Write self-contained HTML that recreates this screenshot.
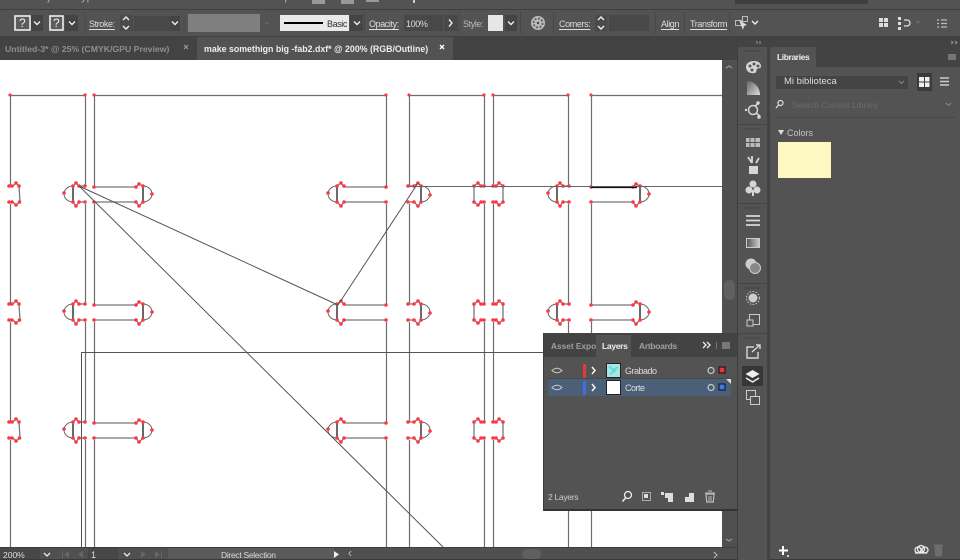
<!DOCTYPE html>
<html><head><meta charset="utf-8"><style>
html,body{margin:0;padding:0;width:960px;height:560px;overflow:hidden;background:#535353}
body{position:relative;font-family:"Liberation Sans",sans-serif;font-size:9px;color:#ddd}
.t{position:absolute;white-space:nowrap;line-height:12px}
.c{letter-spacing:-.4px}
.u{text-decoration:underline;text-underline-offset:2px}
svg{position:absolute;left:0;top:0}
</style></head><body>
<svg width="960" height="560" viewBox="0 0 960 560" fill="none">
<defs>
<linearGradient id="g" x1="0" x2="1"><stop offset="0" stop-color="#555"/><stop offset="1" stop-color="#ccc"/></linearGradient>
<linearGradient id="g2" x1="1" y1="1" x2="0" y2="0"><stop offset="0" stop-color="#ddd"/><stop offset="1" stop-color="#666"/></linearGradient>
<g id="B">
<path d="M85 186H79L76 183L73 186M85 202H79L76 206L73 202" stroke="#777" stroke-width="1.200"/>
<path d="M73 186V202" stroke="#444" stroke-width="1.600"/>
<path d="M73 186A9 8 0 0 0 73 202" stroke="#666"/>
<g fill="#f93a44"><circle cx="85" cy="186" r="1.800"/><circle cx="79" cy="186" r="1.800"/><circle cx="76" cy="183" r="1.800"/><circle cx="73" cy="186" r="1.800"/><circle cx="64" cy="193" r="1.800"/><circle cx="73" cy="202" r="1.800"/><circle cx="76" cy="206" r="1.800"/><circle cx="79" cy="202" r="1.800"/><circle cx="85" cy="202" r="1.800"/></g>
</g>
<g id="C">
<path d="M94 187H136L139 184L143 186M94 202H136L139 206L143 202" stroke="#777" stroke-width="1.300"/>
<path d="M143 186V202" stroke="#444" stroke-width="1.600"/>
<path d="M143 186A9 8 0 0 1 143 202" stroke="#666"/>
<g fill="#f93a44"><circle cx="94" cy="187" r="1.800"/><circle cx="136" cy="187" r="1.800"/><circle cx="139" cy="184" r="1.800"/><circle cx="143" cy="186" r="1.800"/><circle cx="152" cy="194" r="1.800"/><circle cx="143" cy="202" r="1.800"/><circle cx="139" cy="206" r="1.800"/><circle cx="136" cy="202" r="1.800"/><circle cx="94" cy="202" r="1.800"/></g>
</g>
<g id="row">
<path d="M10 186H13L16 183L19 186L20 202L16 205L13 202H10" stroke="#777" stroke-width="1.300"/>
<g fill="#f93a44"><circle cx="9" cy="186" r="1.800"/><circle cx="12" cy="186" r="1.800"/><circle cx="16" cy="183" r="1.800"/><circle cx="19" cy="186" r="1.800"/><circle cx="19.500" cy="202" r="1.800"/><circle cx="16" cy="205" r="1.800"/><circle cx="12" cy="202" r="1.800"/><circle cx="9" cy="202" r="1.800"/></g>
<use href="#B"/><use href="#C"/>
<path d="M386 187H344L341 183L337 186M386 202H344L341 206L337 202" stroke="#777" stroke-width="1.300"/>
<path d="M337 186V202" stroke="#444" stroke-width="1.600"/>
<path d="M337 186A9 8 0 0 0 337 202" stroke="#666"/>
<g fill="#f93a44"><circle cx="386" cy="187" r="1.800"/><circle cx="344" cy="186" r="1.800"/><circle cx="341" cy="183" r="1.800"/><circle cx="337" cy="186" r="1.800"/><circle cx="328" cy="193" r="1.800"/><circle cx="337" cy="202" r="1.800"/><circle cx="341" cy="206" r="1.800"/><circle cx="344" cy="202" r="1.800"/><circle cx="386" cy="202" r="1.800"/></g>
<path d="M408 186H414L418 183L421 186M408 202H414L418 206L421 202" stroke="#777" stroke-width="1.300"/>
<path d="M421 186V202" stroke="#444" stroke-width="1.600"/>
<path d="M421 186A9 8 0 0 1 421 202" stroke="#666"/>
<g fill="#f93a44"><circle cx="408" cy="186" r="1.800"/><circle cx="414" cy="186" r="1.800"/><circle cx="418" cy="183" r="1.800"/><circle cx="421" cy="186" r="1.800"/><circle cx="430" cy="195" r="1.800"/><circle cx="421" cy="202" r="1.800"/><circle cx="418" cy="206" r="1.800"/><circle cx="414" cy="202" r="1.800"/><circle cx="408" cy="202" r="1.800"/></g>
<path d="M484 186H481L478 183L474 186V202L478 205L481 202H484" stroke="#777" stroke-width="1.300"/>
<path d="M493 186H496L499 183L503 186V202L499 205L496 202H493" stroke="#777" stroke-width="1.300"/>
<g fill="#f93a44"><circle cx="484" cy="186" r="1.800"/><circle cx="481" cy="186" r="1.800"/><circle cx="478" cy="183" r="1.800"/><circle cx="474" cy="186" r="1.800"/><circle cx="474" cy="202" r="1.800"/><circle cx="478" cy="205" r="1.800"/><circle cx="481" cy="202" r="1.800"/><circle cx="484" cy="202" r="1.800"/><circle cx="493" cy="186" r="1.800"/><circle cx="496" cy="186" r="1.800"/><circle cx="499" cy="183" r="1.800"/><circle cx="503" cy="186" r="1.800"/><circle cx="503" cy="202" r="1.800"/><circle cx="499" cy="205" r="1.800"/><circle cx="496" cy="202" r="1.800"/><circle cx="493" cy="202" r="1.800"/></g>
<use href="#B" transform="translate(484 0)"/><use href="#C" transform="translate(497 0)"/>
</g>
</defs>

<rect width="960" height="560" fill="#535353"/>
<rect x="0" y="9" width="960" height="1" fill="#3f3f3f"/>
<rect x="0" y="36" width="960" height="1" fill="#3f3f3f"/>
<rect x="0" y="37" width="737" height="23" fill="#434343"/>
<rect x="197" y="37" width="256" height="23" fill="#535353"/>

<rect x="0" y="60" width="722" height="487" fill="#fff"/>
<g stroke="#6e6e6e" stroke-width="1.200">
<path d="M10 95.500H85M94 95.500H386M409 95.500H484M493 95.500H568M591 95.500H722"/>
<path d="M10.500 95V186M85.500 95V186M94.500 95V187M386.500 95V187M409.500 95V186M484.500 95V186M493.500 95V186M568.500 95V186M591.500 95V187"/>
<path d="M10.500 204V304M85.500 204V304M94.500 204V304M386.500 204V304M409.500 204V304M484.500 204V304M493.500 204V304M568.500 204V304M591.500 204V304"/>
<path d="M10.500 322V422M85.500 322V422M94.500 322V422M386.500 322V422M409.500 322V422M484.500 322V422M493.500 322V422M568.500 322V422M591.500 322V422"/>
<path d="M10.500 440V547M85.500 440V547M94.500 440V547M386.500 440V547M409.500 440V547M484.500 440V547M493.500 440V547M568.500 440V547M591.500 440V547"/>
</g>
<use href="#row"/>
<use href="#row" transform="translate(0 118)"/>
<use href="#row" transform="translate(0 236)"/>
<path d="M409 186.500H722" stroke="#666"/>
<path d="M591 187.500H637" stroke="#111" stroke-width="1.200"/>
<path d="M79 186L338 305M79 186L443 547M418 183L338 305" stroke="#555"/>
<path d="M81.500 547V352.500H543" stroke="#555"/>
<g fill="#f93a44"><circle cx="10" cy="95" r="1.600"/><circle cx="85" cy="95" r="1.600"/><circle cx="94" cy="95" r="1.600"/><circle cx="386" cy="95" r="1.600"/><circle cx="409" cy="95" r="1.600"/><circle cx="484" cy="95" r="1.600"/><circle cx="493" cy="95" r="1.600"/><circle cx="568" cy="95" r="1.600"/><circle cx="591" cy="95" r="1.600"/></g>

<rect x="722" y="60" width="15" height="487" fill="#505050"/>
<rect x="724" y="280" width="11" height="20" rx="5" fill="#606060"/>
<path d="M726 68l3-2 3 2M726 539l3 2 3-2" stroke="#999" stroke-width="1.200"/>

<rect x="0" y="547" width="737" height="13" fill="#505050"/>
<rect x="0" y="547" width="737" height="1" fill="#3d3d3d"/>
<rect x="0" y="559" width="960" height="1" fill="#3a3a3a"/>
<rect x="0" y="548" width="40" height="11" fill="#474747"/>
<rect x="88" y="548" width="30" height="11" fill="#474747"/>
<rect x="168" y="548" width="166" height="11" fill="#5a5a5a"/>
<rect x="522" y="549" width="19" height="10" rx="5" fill="#5f5f5f"/>
<g stroke="#eee" stroke-width="1.300"><path d="M44 553l3 3 3-3M124 553l3 3 3-3"/></g>
<g fill="#666"><path d="M62 551v7h1v-7zM69 551l-5 3.500 5 3.500zM83 551l-5 3.500 5 3.500zM141 551l5 3.500-5 3.500zM155 551l5 3.500-5 3.500zM161 551v7h1v-7z"/></g>
<path d="M334 551l5 3.500-5 3.500z" fill="#eee"/>
<path d="M351 551l-2 2.500 2 2.500M714 552l3 3-3 3" stroke="#bbb"/>

<g>
<rect x="31" y="15" width="12" height="16" fill="#444"/>
<rect x="65" y="15" width="13" height="16" fill="#444"/>
<rect x="15" y="16" width="15" height="14" fill="#5c5c5c" stroke="#eee" stroke-width="1.600"/>
<rect x="50" y="16" width="13" height="14" fill="#5c5c5c" stroke="#eee" stroke-width="1.600"/>
<rect x="120" y="15" width="13" height="16" fill="#4a4a4a"/>
<rect x="134" y="16" width="36" height="15" fill="#484848"/>
<rect x="170" y="16" width="10" height="15" fill="#444"/>
<rect x="188" y="14" width="72" height="18" fill="#7f7f7f"/>
<rect x="280" y="15" width="69" height="16" fill="#e9e9e9"/>
<rect x="284" y="22" width="39" height="2" fill="#000"/>
<rect x="350" y="15" width="13" height="16" fill="#444"/>
<rect x="404" y="15" width="39" height="16" fill="#484848"/>
<rect x="444" y="15" width="14" height="16" fill="#484848"/>
<rect x="488" y="15" width="15" height="16" fill="#e6e6e6"/>
<rect x="505" y="15" width="12" height="16" fill="#444"/>
<rect x="595" y="15" width="12" height="16" fill="#4a4a4a"/>
<rect x="609" y="15" width="40" height="16" fill="#484848"/>
<rect x="735" y="0" width="133" height="4" fill="#3f3f3f"/>
<rect x="312" y="0" width="13" height="4" fill="#999"/>
<rect x="341" y="0" width="13" height="4" fill="#999"/>
<rect x="366" y="0" width="13" height="2" fill="#999"/>
<path d="M414 0v3" stroke="#ccc" stroke-width="2"/>
<g stroke="#eee" stroke-width="1.400">
<path d="M34 21.500l3 3 3-3M69 21.500l3 3 3-3M172 21.500l3 3 3-3M354 21.500l3 3 3-3M508 21.500l3 3 3-3M752 21l3 3 3-3"/>
<path d="M123 20l3-3 3 3M123 26l3 3 3-3M598 20l3-3 3 3M598 26l3 3 3-3"/>
<path d="M449 19.500l3 3.500-3 3.500"/>
</g>
<path d="M265 22l2 2 2-2M916 21l2 2 2-2" stroke="#6e6e6e"/>
<circle cx="538" cy="23" r="7" fill="#bbb"/>
<circle cx="538" cy="23" r="4.500" fill="none" stroke="#666" stroke-width="2" stroke-dasharray="2 1.500"/>
<circle cx="538" cy="23" r="1.200" fill="#444"/>
<g stroke="#bbb"><rect x="735.500" y="20.500" width="6" height="5" fill="none"/><rect x="742.500" y="16.500" width="5" height="5" fill="none"/></g>
<path d="M739 20l8 5-3 1-1 4z" fill="#ddd"/>
<g fill="#ddd"><rect x="879" y="18" width="4" height="4"/><rect x="884" y="18" width="4" height="4"/><rect x="879" y="23" width="4" height="4"/><rect x="884" y="23" width="4" height="4"/>
<rect x="898" y="17" width="3" height="3"/><rect x="898" y="22" width="3" height="3"/><rect x="898" y="27" width="3" height="3"/></g>
<path d="M904 20h3a3 3 0 0 1 0 6h-3" stroke="#ddd" stroke-width="1.300"/>
<path d="M937 20h2M941 20h6M937 23.500h2M941 23.500h6M937 27h2M941 27h6" stroke="#bbb" stroke-width="1.300"/>
<g stroke="#484848"><path d="M85 12v22M184 12v22M364.500 12v22M459.500 12v22M520.500 12v22M553.500 12v22M655.500 12v22M684.500 12v22M729.500 12v22"/></g>
</g>
<path d="M184 45l4 4m0-4l-4 4" stroke="#999" stroke-width="1.200"/>
<path d="M440 45l4 4m0-4l-4 4" stroke="#fff" stroke-width="1.300"/>

<rect x="737" y="37" width="223" height="10" fill="#434343"/>
<rect x="737" y="47" width="32" height="513" fill="#535353"/>
<rect x="737" y="37" width="1" height="523" fill="#3d3d3d"/>
<rect x="767" y="47" width="3" height="513" fill="#434343"/>
<path d="M757 41v3M760 41v3M951 41l2 1.500-2 1.500M955 41l2 1.500-2 1.500" stroke="#999"/>
<path d="M738 124.500h29M738 203.500h29M738 283.500h29M738 333.500h29" stroke="#454545"/>
<path d="M744 51h16M744 129h16M744 208h16M744 288h16M744 338h16" stroke="#4b4b4b" stroke-width="2"/>
<path d="M746 67c0-4 4-6 8-6s7 2 7 5-3 2-4 3 0 3-2 4c-4 1-9-1-9-6z" fill="#d6d6d6"/>
<g fill="#555"><circle cx="750" cy="66" r="1.500"/><circle cx="754" cy="64" r="1.500"/><circle cx="758" cy="66" r="1.500"/><circle cx="752" cy="70" r="1.500"/></g>
<path d="M747 81c7 0 13 6 13 14h-13z" fill="url(#g2)"/>
<g fill="none" stroke="#d6d6d6" stroke-width="1.500"><circle cx="753" cy="110" r="4.500"/><path d="M755 106l4-3M756 113l4 3"/></g>
<g fill="#d6d6d6"><circle cx="758" cy="103" r="1.800"/><circle cx="759" cy="117" r="1.800"/><circle cx="746" cy="110" r="1.200"/></g>
<rect x="746" y="138" width="14" height="9" fill="#bbb"/>
<path d="M750 138v9M755 138v9M746 142.500h14" stroke="#555"/>
<path d="M748 157l4 6M752 156v7M759 158l-3 5" stroke="#d6d6d6" stroke-width="1.800"/>
<rect x="749" y="166" width="9" height="8" fill="#d6d6d6"/>
<g fill="#d6d6d6"><circle cx="753" cy="184" r="3.500"/><circle cx="749" cy="190" r="3.500"/><circle cx="757" cy="190" r="3.500"/><rect x="752" y="190" width="2" height="6"/></g>
<path d="M746 216h14M746 220.500h14M746 225h14" stroke="#d6d6d6" stroke-width="1.800"/>
<rect x="746.500" y="238.500" width="13" height="9" fill="url(#g)" stroke="#ccc"/>
<circle cx="751" cy="264" r="5.500" fill="#ccc"/><circle cx="755" cy="268" r="5.500" fill="#888" stroke="#ccc"/>
<circle cx="753" cy="298" r="4.500" fill="#ccc"/><circle cx="753" cy="298" r="6.500" fill="none" stroke="#ccc" stroke-dasharray="1.500 1.500"/>
<rect x="749.500" y="314.500" width="10" height="10" fill="none" stroke="#ccc"/>
<rect x="747" y="320" width="6" height="6" fill="#555" stroke="#ccc"/>
<path d="M754 347h-7v11h11v-6" fill="none" stroke="#d6d6d6" stroke-width="1.400"/>
<path d="M752 352l8-7M756 345h4v4" fill="none" stroke="#d6d6d6" stroke-width="1.400"/>
<rect x="742" y="366" width="21" height="20" fill="#373737"/>
<path d="M752.500 370l7 4-7 4-7-4z" fill="#eee"/>
<path d="M746 378l6.500 4 6.500-4" fill="none" stroke="#eee" stroke-width="1.500"/>
<rect x="746.500" y="390.500" width="9" height="9" fill="none" stroke="#ccc"/>
<rect x="750.500" y="396.500" width="9" height="8" fill="#535353" stroke="#ccc"/>

<rect x="770" y="47" width="190" height="20" fill="#434343"/>
<rect x="770" y="47" width="46" height="21" fill="#535353"/>
<rect x="948" y="54" width="8" height="6" fill="#777"/>
<rect x="776" y="76" width="132" height="13" fill="#444"/>
<path d="M899 81l2.500 2.500 2.500-2.500" stroke="#888"/>
<rect x="917" y="73" width="15" height="18" fill="#3a3a3a"/>
<g fill="#eee"><rect x="919" y="77" width="5" height="4.500"/><rect x="925" y="77" width="4.500" height="4.500"/><rect x="919" y="82.500" width="5" height="4.500"/><rect x="925" y="82.500" width="4.500" height="4.500"/></g>
<path d="M940 78h9M940 81.500h9M940 85h9" stroke="#ccc" stroke-width="1.600"/>
<circle cx="780.500" cy="103" r="2.500" fill="none" stroke="#ddd" stroke-width="1.200"/><path d="M778.500 105l-2.500 3" stroke="#ddd" stroke-width="1.300"/>
<path d="M946 103l2.500 2.500 2.500-2.500" stroke="#888"/>
<path d="M776 117.500h180" stroke="#484848"/>
<path d="M778 130h6l-3 5z" fill="#ddd"/>
<rect x="778" y="142" width="53" height="36" fill="#fdf8c2"/>
<path d="M783 546v9M779 550.500h9" stroke="#fff" stroke-width="2"/>
<rect x="787" y="555" width="2" height="2" fill="#ccc"/>
<g fill="none" stroke="#eee" stroke-width="1.300"><circle cx="918" cy="550" r="3"/><circle cx="921" cy="549" r="3.500"/><circle cx="925" cy="550" r="3"/><path d="M915 553h12"/></g>
<path d="M935 546h7l-.7 10h-5.600zM934 545h9" fill="#6e6e6e" stroke="#6e6e6e"/>

<rect x="543" y="333" width="194" height="177" fill="#535353"/>
<rect x="543" y="333" width="194" height="24" fill="#434343"/>
<rect x="596" y="335" width="35" height="22" fill="#535353"/>
<rect x="543" y="509" width="194" height="2" fill="#333"/>
<rect x="543" y="333" width="1" height="177" fill="#3d3d3d"/>
<path d="M703 342l3 3-3 3M707 342l3 3-3 3" stroke="#eee" stroke-width="1.300"/>
<path d="M716.500 342v7" stroke="#777"/><rect x="722" y="342" width="8" height="7" fill="#777"/>
<rect x="548" y="379" width="183" height="17" fill="#4b6078"/>
<path d="M548 378.500h183" stroke="#484848"/>
<rect x="583" y="364" width="3" height="14" fill="#e5383f"/>
<rect x="583" y="381" width="3" height="14" fill="#3f6fe0"/>
<g fill="none" stroke="#ccc"><path d="M552 370.500q5-4.500 10 0q-5 4.500-10 0zM552 387.500q5-4.500 10 0q-5 4.500-10 0z"/></g>
<path d="M592 367l3 3.500-3 3.500M592 384l3 3.500-3 3.500" fill="none" stroke="#fff" stroke-width="1.400"/>
<rect x="606.500" y="363.500" width="14" height="14" fill="#a5e9e6" stroke="#222"/>
<path d="M609 366l4 4 5-3M610 374l6-4" stroke="#6cd6d8" stroke-width="2"/>
<rect x="606.500" y="380.500" width="14" height="14" fill="#fff" stroke="#222"/>
<circle cx="711" cy="370.500" r="3" fill="none" stroke="#ccc" stroke-width="1.200"/>
<circle cx="711" cy="387.500" r="3" fill="none" stroke="#ccc" stroke-width="1.200"/>
<rect x="719" y="367" width="6" height="6" fill="#e8343c" stroke="#111"/>
<rect x="719" y="384" width="6" height="6" fill="#3f78ea" stroke="#111"/>
<path d="M726 379h5v5z" fill="#ddd"/>
<circle cx="628" cy="495" r="3.500" fill="none" stroke="#eee" stroke-width="1.300"/><path d="M625.500 498l-3 3.500" stroke="#eee" stroke-width="1.500"/>
<rect x="642.500" y="492.500" width="8" height="8" fill="none" stroke="#aaa"/><rect x="644" y="494" width="4" height="4" fill="#ddd"/>
<path d="M665 493h8v9h-5v-4h-3z" fill="#ddd"/><rect x="661" y="492" width="3" height="3" fill="#ddd"/>
<path d="M685 493h9v9h-9z" fill="#ddd"/><path d="M684 493h5v4h-5z" fill="#535353"/>
<path d="M706 494h8l-.7 8h-6.600z" fill="none" stroke="#bbb" stroke-width="1.200"/><path d="M705 493h10M708 491h4" stroke="#bbb"/>
<path d="M709 496v5M711 496v5" stroke="#bbb"/>
</svg>

<span class="t" style="left:8px;top:-9px;color:#b0b0b0;font-size:11px">Edit</span>
<span class="t" style="left:33px;top:-9px;color:#b0b0b0;font-size:11px">Object</span>
<span class="t" style="left:75px;top:-9px;color:#b0b0b0;font-size:11px">Type</span>
<span class="t" style="left:108px;top:-9px;color:#b0b0b0;font-size:11px">Select</span>
<span class="t" style="left:148px;top:-9px;color:#b0b0b0;font-size:11px">Effect</span>
<span class="t" style="left:187px;top:-9px;color:#b0b0b0;font-size:11px">View</span>
<span class="t" style="left:221px;top:-9px;color:#b0b0b0;font-size:11px">Window</span>
<span class="t" style="left:268px;top:-9px;color:#b0b0b0;font-size:11px">Help</span>

<span class="t" style="left:19px;top:17px;font-size:12px;color:#eee">?</span>
<span class="t" style="left:53px;top:17px;font-size:12px;color:#eee">?</span>
<span class="t u c" style="left:89px;top:18px">Stroke:</span>
<span class="t c" style="left:327px;top:18px;color:#333">Basic</span>
<span class="t u c" style="left:369px;top:18px">Opacity:</span>
<span class="t c" style="left:406px;top:18px">100%</span>
<span class="t c" style="left:463px;top:18px;color:#bbb">Style:</span>
<span class="t u c" style="left:559px;top:18px">Corners:</span>
<span class="t u c" style="left:661px;top:18px">Align</span>
<span class="t u c" style="left:690px;top:18px">Transform</span>

<span class="t" style="left:5px;top:43px;color:#8f8f8f;font-weight:bold;font-size:8.700px">Untitled-3* @ 25% (CMYK/GPU Preview)</span>
<span class="t" style="left:204px;top:43px;color:#eee;font-weight:bold;font-size:8.800px">make somethign big -fab2.dxf* @ 200% (RGB/Outline)</span>

<span class="t" style="left:777px;top:51px;color:#eee;font-weight:bold;font-size:8.500px;letter-spacing:-.4px">Libraries</span>
<span class="t" style="left:784px;top:76px;color:#ddd;font-size:9.500px">Mi biblioteca</span>
<span class="t" style="left:792px;top:99px;color:#6c6c6c;font-size:8.500px">Search Current Library</span>
<span class="t" style="left:787px;top:127px;color:#c4c4c4;font-size:9px">Colors</span>

<span class="t" style="left:551px;top:340px;color:#a0a0a0;font-weight:bold;font-size:8.300px;width:45px;overflow:hidden">Asset Export</span>
<span class="t" style="left:602px;top:340px;color:#eee;font-weight:bold;font-size:8.500px;letter-spacing:-.3px">Layers</span>
<span class="t" style="left:639px;top:340px;color:#a0a0a0;font-weight:bold;font-size:8.500px;letter-spacing:-.3px">Artboards</span>
<span class="t" style="left:625px;top:365px;color:#ddd;font-size:9px;letter-spacing:-.5px">Grabado</span>
<span class="t" style="left:625px;top:382px;color:#ddd;font-size:9px;letter-spacing:-.5px">Corte</span>
<span class="t" style="left:548px;top:491px;color:#ccc;font-size:8.500px;letter-spacing:-.3px">2 Layers</span>

<span class="t" style="left:3px;top:549px;font-size:8.500px">200%</span>
<span class="t" style="left:91px;top:549px;font-size:9px">1</span>
<span class="t" style="left:221px;top:549px;font-size:8.500px;color:#d8d8d8;letter-spacing:-.3px">Direct Selection</span>
</body></html>
